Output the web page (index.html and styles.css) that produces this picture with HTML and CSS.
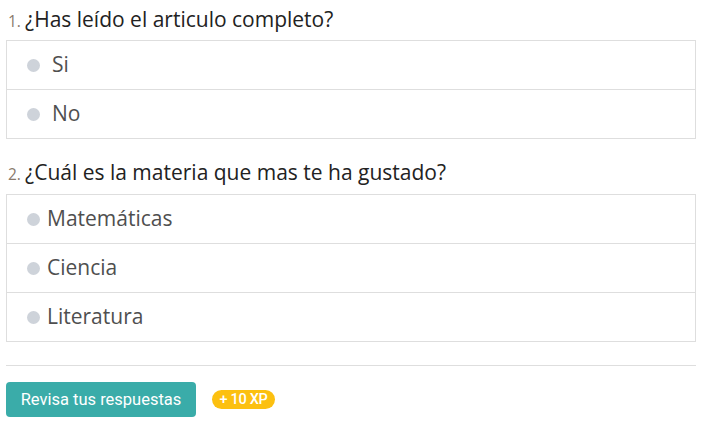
FILE: index.html
```html
<!DOCTYPE html>
<html lang="es">
<head>
<meta charset="utf-8">
<title>Cuestionario</title>
<link rel="stylesheet" href="styles.css">
</head>
<body>
<div class="quiz">
  <div class="question q1">
    <div class="q-title"><span class="q-num">1.</span> <span class="q-text">¿Has leído el articulo completo?</span></div>
    <ul class="options wide">
      <li class="option"><span class="radio"></span><span class="opt-text">Si</span></li>
      <li class="option"><span class="radio"></span><span class="opt-text">No</span></li>
    </ul>
  </div>
  <div class="question q2">
    <div class="q-title"><span class="q-num">2.</span> <span class="q-text">¿Cuál es la materia que mas te ha gustado?</span></div>
    <ul class="options">
      <li class="option"><span class="radio"></span><span class="opt-text">Matemáticas</span></li>
      <li class="option"><span class="radio"></span><span class="opt-text">Ciencia</span></li>
      <li class="option"><span class="radio"></span><span class="opt-text">Literatura</span></li>
    </ul>
  </div>
  <hr class="divider">
  <div class="actions">
    <button class="btn-check">Revisa tus respuestas</button>
    <span class="xp-badge">+ 10 XP</span>
  </div>
</div>
</body>
</html>
```
FILE: styles.css
```css
html, body {
  margin: 0;
  padding: 0;
  background: #ffffff;
}
body {
  padding: 0 8px 0 6px;
  font-family: "Open Sans", "Lato", sans-serif;
}
.quiz {
  display: flex;
  flex-direction: column;
}
.q-title {
  height: 24px;
  line-height: 24px;
  padding-left: 2px;
  color: #222222;
  white-space: nowrap;
}
.q1 .q-title {
  margin-top: 7px;
  margin-bottom: 9px;
}
.q2 .q-title {
  margin-top: 21px;
  margin-bottom: 10px;
}
.q-num {
  font-size: 15.5px;
  color: #8a7a6c;
}
.q-text {
  font-size: 21px;
}
.options {
  list-style: none;
  margin: 0;
  padding: 0;
  border: 1px solid #dedede;
}
.option {
  height: 48px;
  display: flex;
  align-items: center;
  padding-left: 20px;
  gap: 7px;
}
.option + .option {
  border-top: 1px solid #dedede;
}
.wide .option {
  gap: 12px;
}
.radio {
  width: 13px;
  height: 13px;
  border-radius: 50%;
  background: #ced3da;
  flex: none;
}
.opt-text {
  font-size: 21px;
  line-height: 26px;
  margin-top: -2px;
  color: #4f4f4f;
}
.divider {
  margin: 23px 0 0 0;
  border: 0;
  border-top: 1px solid #dedede;
  height: 0;
}
.actions {
  margin-top: 16px;
  display: flex;
  align-items: center;
  gap: 16px;
}
.btn-check {
  width: 190px;
  height: 35px;
  border: 0;
  border-radius: 4px;
  background: #3aaca9;
  color: #ffffff;
  font-family: "Roboto", sans-serif;
  font-size: 16.5px;
  padding: 0;
}
.xp-badge {
  width: 63px;
  height: 19px;
  border-radius: 10px;
  background: #fcc010;
  color: #ffffff;
  font-family: "Roboto", sans-serif;
  font-weight: 500;
  font-size: 14.5px;
  line-height: 19px;
  text-align: center;
  letter-spacing: -0.3px;
}
```
